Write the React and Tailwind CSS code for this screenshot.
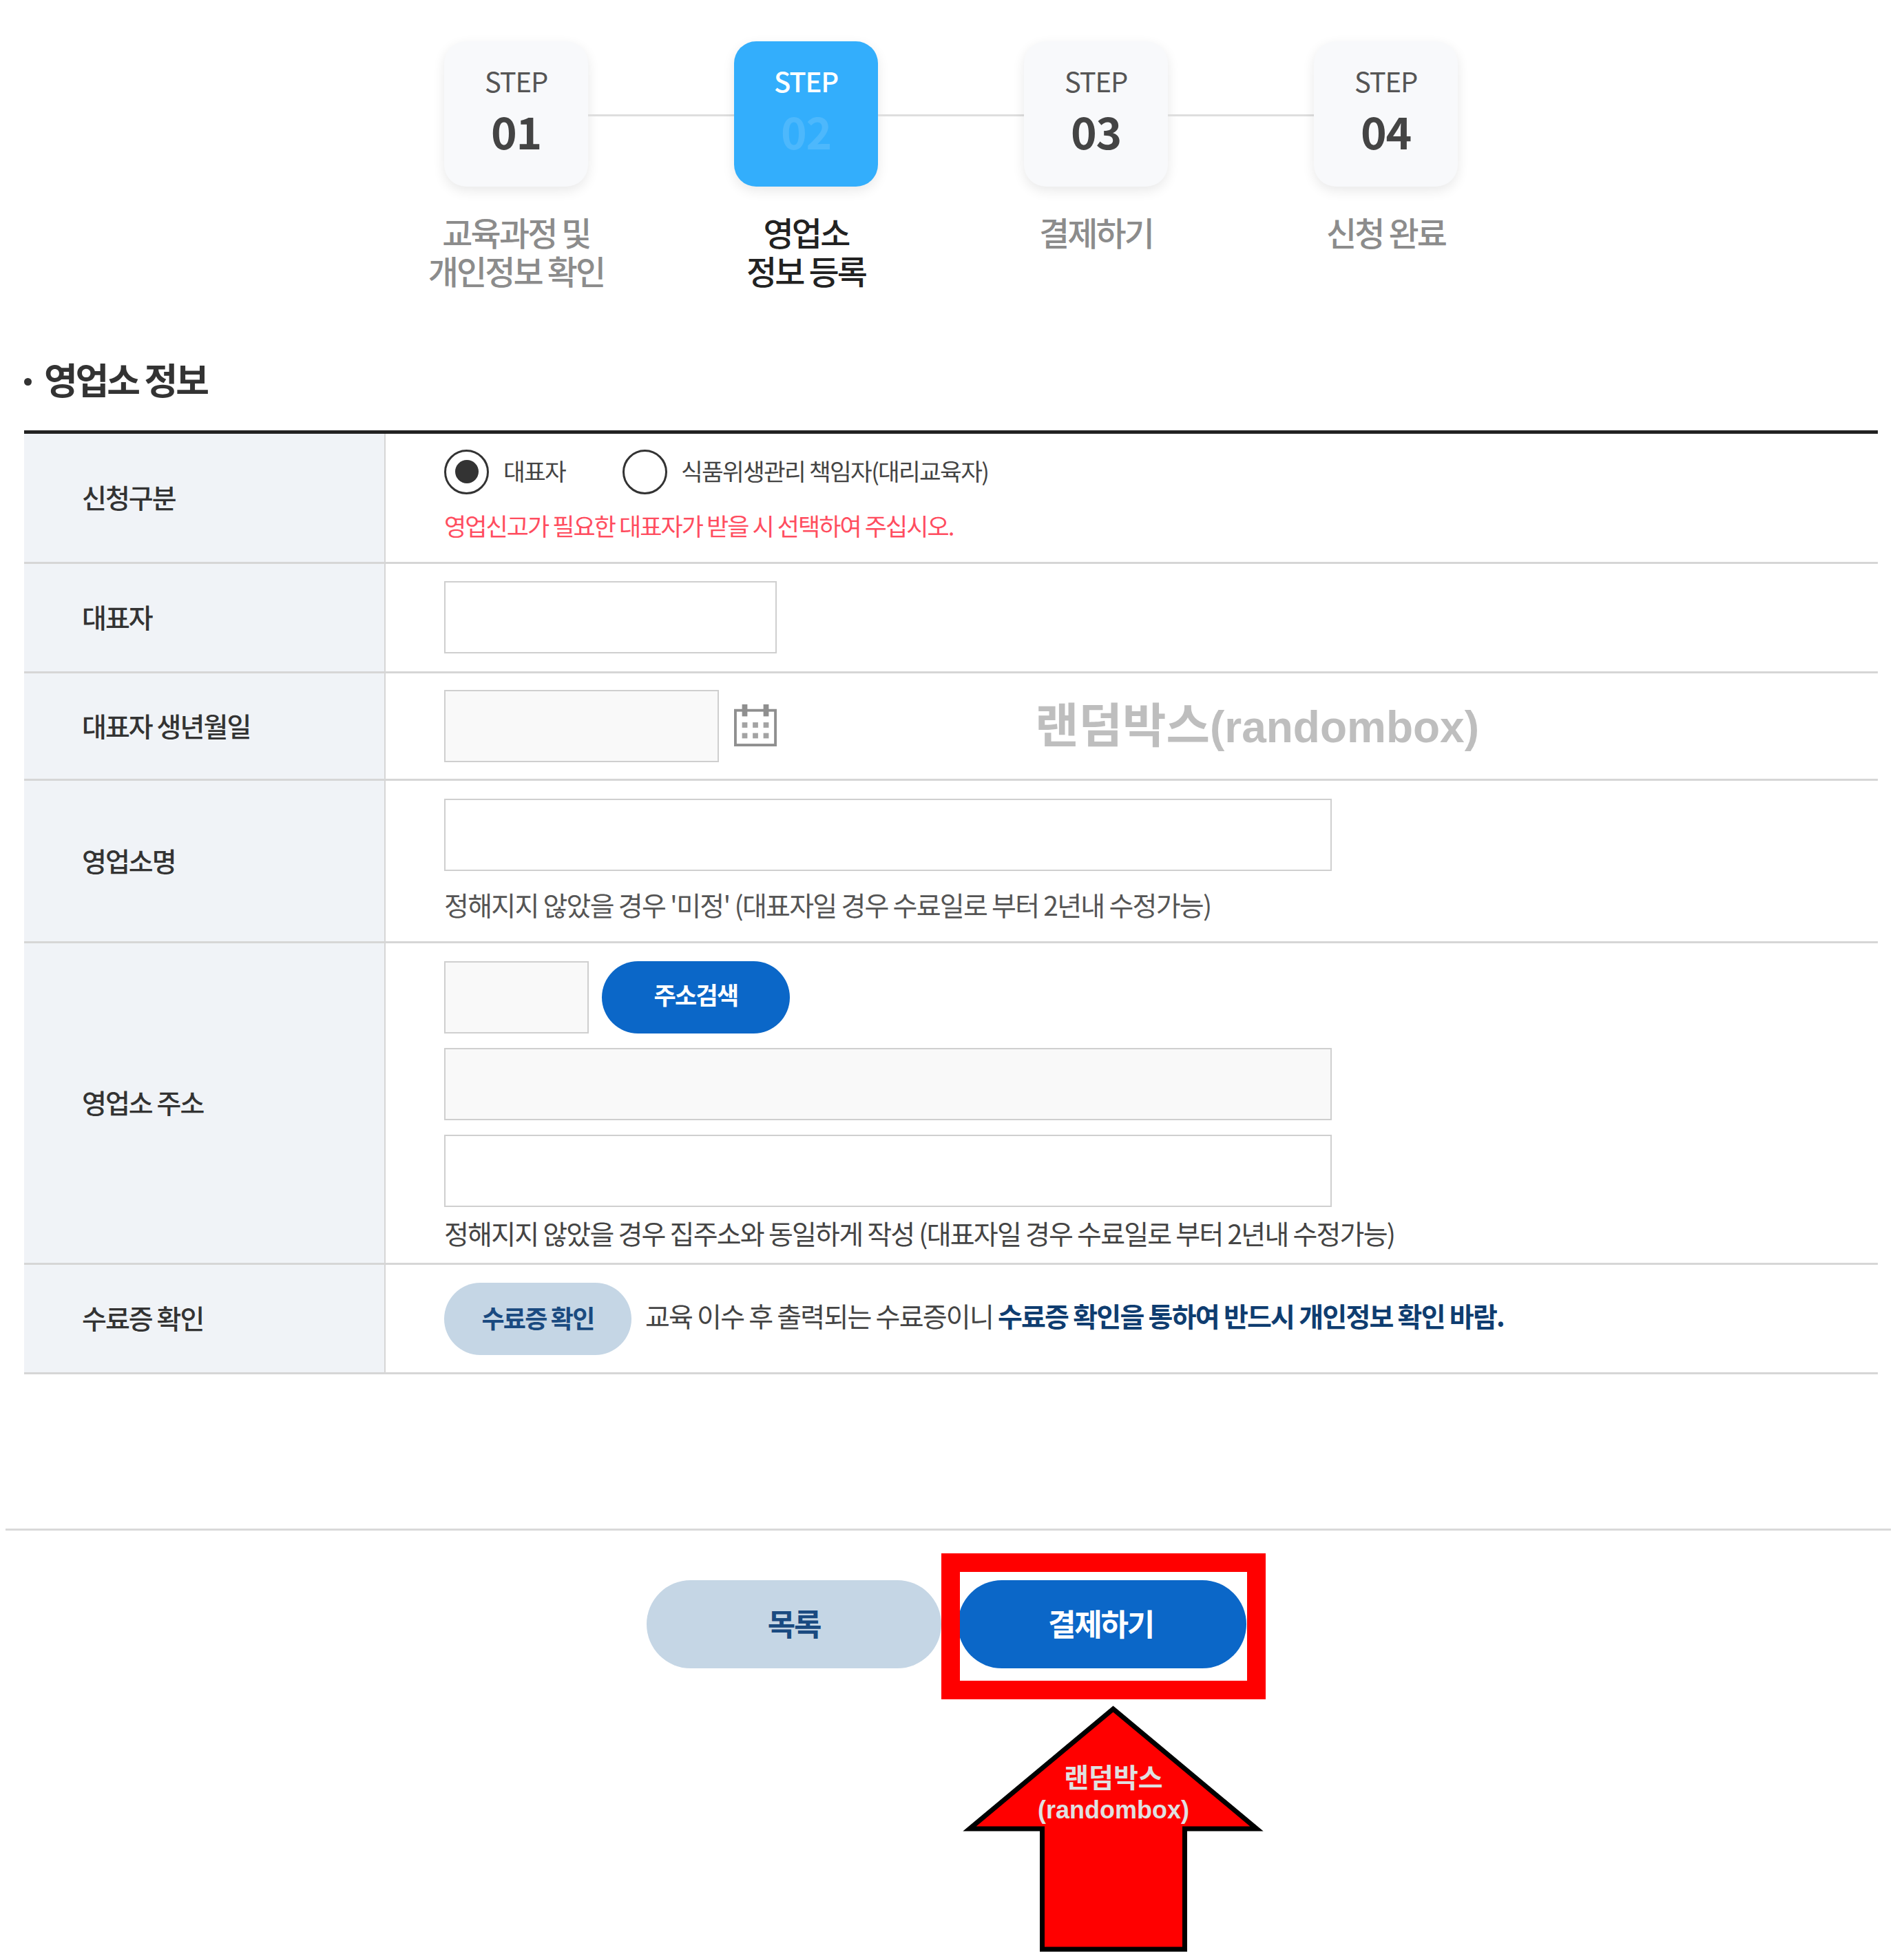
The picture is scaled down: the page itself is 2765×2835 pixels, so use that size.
const KR = { fontFamily: '"Noto Sans CJK KR", "Noto Sans", sans-serif' };

const STEPS = [
  { no: '01', lines: ['교육과정 및', '개인정보 확인'] },
  { no: '02', lines: ['영업소', '정보 등록'], active: true },
  { no: '03', lines: ['결제하기'] },
  { no: '04', lines: ['신청 완료'] },
];

function StepCard({ no, active }) {
  return (
    <div
      className={`w-[209px] h-[211px] shrink-0 rounded-[32px] flex flex-col items-center shadow-[0_6px_18px_rgba(0,0,0,0.09)] ${
        active ? 'bg-[#33aefc]' : 'bg-[#f8f9fb]'
      }`}
    >
      <span className={`mt-[35px] text-[40px] leading-[44px] tracking-[-0.03em] ${active ? 'text-white font-medium' : 'text-[#555555]'}`}>
        STEP
      </span>
      <span className={`mt-[13px] text-[64px] leading-[74px] font-bold tracking-[-0.02em] ${active ? 'text-[#4db8fc]' : 'text-[#444444]'}`}>
        {no}
      </span>
    </div>
  );
}

function Row({ label, height, children }) {
  return (
    <div className="flex border-b-[3px] border-[#d6d6d6]" style={{ height }}>
      <div className="w-[525px] shrink-0 bg-[#f0f3f7] border-r-2 border-[#d6d6d6] pl-[84px] pb-[3px] flex items-center text-[39px] tracking-[-0.05em] font-medium text-[#333333]">
        {label}
      </div>
      <div className="flex-1 pl-[85px] flex flex-col">{children}</div>
    </div>
  );
}

function Field({ width, gray }) {
  return (
    <div className={`h-[105px] border-2 border-[#cfcfcf] shrink-0 ${gray ? 'bg-[#f9f9f9]' : 'bg-white'}`} style={{ width }} />
  );
}

function Radio({ checked }) {
  return (
    <span className="w-[65px] h-[65px] rounded-full border-[3px] border-[#333333] flex items-center justify-center shrink-0 bg-white">
      {checked && <span className="w-[34px] h-[34px] rounded-full bg-[#333333]" />}
    </span>
  );
}

function CalendarIcon() {
  return (
    <svg className="w-[62px] h-[62px] ml-[22px] mt-[20px]" viewBox="0 0 64 64" fill="none">
      <rect x="2" y="10" width="60" height="52" stroke="#8f8f8f" strokeWidth="4" />
      <rect x="12" y="1" width="8" height="18" fill="#8f8f8f" />
      <rect x="44" y="1" width="8" height="18" fill="#8f8f8f" />
      {[12, 28, 44].map((x) =>
        [28, 44].map((y) => <rect key={`${x}-${y}`} x={x} y={y} width="8" height="8" fill="#a3a3a3" />)
      )}
    </svg>
  );
}

export default function App() {
  return (
    <div className="relative w-[2765px] h-[2835px] bg-white overflow-hidden" style={KR}>
      {/* Steps */}
      <div className="flex items-center ml-[645px] pt-[60px]">
        {STEPS.map((s, i) => (
          <div key={s.no} className="flex items-center">
            <StepCard no={s.no} active={s.active} />
            {i < 3 && <div className="w-[212px] h-[3px] mt-[3px] bg-[#dedede]" />}
          </div>
        ))}
      </div>
      <div className="flex ml-[539px] mt-[37px] h-[112px]">
        {STEPS.map((s) => (
          <div
            key={s.no}
            className={`w-[421px] text-center text-[48px] leading-[56px] tracking-[-0.06em] font-medium ${
              s.active ? 'text-[#222222]' : 'text-[#8c8c8c]'
            }`}
          >
            {s.lines.map((l) => (
              <div key={l}>{l}</div>
            ))}
          </div>
        ))}
      </div>

      {/* Section title */}
      <div className="flex items-center h-[60px] mt-[100px] ml-[35px]">
        <span className="w-[11px] h-[11px] rounded-full bg-[#333333] mt-[8px]" />
        <h2 className="ml-[18px] text-[53px] leading-[60px] tracking-[-0.06em] font-bold text-[#333333]">영업소 정보</h2>
      </div>

      {/* Form table */}
      <div className="ml-[35px] w-[2692px] mt-[45px] border-t-[5px] border-[#222222]">
        <Row label="신청구분" height={189}>
          <div className="flex items-center mt-[22px] h-[66px] text-[34.5px] tracking-[-0.05em] text-[#444444]">
            <Radio checked />
            <span className="ml-[21px] w-[173px] pb-[3px]">대표자</span>
            <Radio />
            <span className="ml-[20px] pb-[3px]">식품위생관리 책임자(대리교육자)</span>
          </div>
          <p className="mt-[23px] text-[35px] leading-[44px] tracking-[-0.055em] text-[#ff4d5f]">
            영업신고가 필요한 대표자가 받을 시 선택하여 주십시오.
          </p>
        </Row>
        <Row label="대표자" height={159}>
          <div className="mt-[25px]">
            <Field width={483} />
          </div>
        </Row>
        <Row label="대표자 생년월일" height={156}>
          <div className="flex mt-[24px]">
            <Field width={399} gray />
            <CalendarIcon />
          </div>
        </Row>
        <Row label="영업소명" height={236}>
          <div className="mt-[26px]">
            <Field width={1289} />
          </div>
          <p className="mt-[26px] text-[39px] leading-[44px] tracking-[-0.045em] text-[#555555]">
            정해지지 않았을 경우 '미정' (대표자일 경우 수료일로 부터 2년내 수정가능)
          </p>
        </Row>
        <Row label="영업소 주소" height={467}>
          <div className="flex mt-[26px]">
            <Field width={210} gray />
            <button className="ml-[19px] w-[273px] h-[105px] pb-[8px] rounded-full bg-[#0b67c8] text-white text-[35px] font-bold tracking-[-0.05em]">
              주소검색
            </button>
          </div>
          <div className="mt-[21px]">
            <Field width={1289} gray />
          </div>
          <div className="mt-[21px]">
            <Field width={1289} />
          </div>
          <p className="mt-[15px] text-[39px] leading-[44px] tracking-[-0.046em] text-[#444444]">
            정해지지 않았을 경우 집주소와 동일하게 작성 (대표자일 경우 수료일로 부터 2년내 수정가능)
          </p>
        </Row>
        <Row label="수료증 확인" height={159}>
          <div className="flex items-center mt-[26px]">
            <button className="w-[272px] h-[105px] pb-[6px] rounded-full bg-[#c5d6e5] text-[#1a4a80] text-[36px] font-bold tracking-[-0.05em]">
              수료증 확인
            </button>
            <p className="ml-[20px] text-[39px] tracking-[-0.046em] text-[#444444] -mt-[10px]">
              교육 이수 후 출력되는 수료증이니{' '}
              <span className="font-bold text-[#0f3d70]">수료증 확인을 통하여 반드시 개인정보 확인 바람.</span>
            </p>
          </div>
        </Row>
      </div>

      {/* Footer */}
      <div className="ml-[8px] w-[2738px] h-[3px] bg-[#d9d9d9] mt-[224px]" />
      <div className="flex ml-[939px] mt-[72px]">
        <button className="w-[428px] h-[128px] pb-[4px] rounded-full bg-[#c5d6e5] text-[#1a4a80] text-[44px] font-bold tracking-[-0.05em]">
          목록
        </button>
        <button className="ml-[24px] w-[419px] h-[128px] pb-[4px] pr-[4px] rounded-full bg-[#0b67c8] text-white text-[44px] font-bold tracking-[-0.05em]">
          결제하기
        </button>
      </div>

      {/* Annotations on top of the screenshot */}
      <div className="absolute left-[1503px] top-[1022px] h-[68px] flex items-center font-bold text-[#bebebe] whitespace-nowrap" style={{ fontFamily: '"Liberation Sans", "Noto Sans CJK KR", sans-serif' }}>
        <span className="text-[69px]">랜덤박스</span>
        <span className="text-[64px]">(randombox)</span>
      </div>
      <div className="absolute left-[1367px] top-[2256px] w-[471px] h-[212px] border-[27px] border-[#ff0000]" />
      <svg className="absolute left-[1395px] top-[2470px]" width="445" height="365" viewBox="0 0 445 365">
        <path
          d="M221.5 12 L430 186 H325.5 V361 H118.5 V186 H13 Z"
          fill="#ff0000"
          stroke="#000000"
          strokeWidth="7"
        />
      </svg>
      <div className="absolute left-[1505px] top-[2560px] w-[224px] flex flex-col items-center text-[#e0e0e0] font-bold leading-[46px] whitespace-nowrap" style={{ fontFamily: '"Liberation Sans", "Noto Sans CJK KR", sans-serif' }}>
        <span className="text-[39px]">랜덤박스</span>
        <span className="text-[36px]">(randombox)</span>
      </div>
    </div>
  );
}
